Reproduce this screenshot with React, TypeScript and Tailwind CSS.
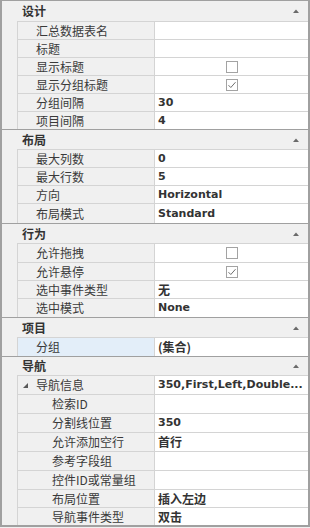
import React from 'react';

type Row = {
    name: string;
    h: string;
    value?: string;
    check?: boolean;
    sub?: boolean;
    expander?: boolean;
    selected?: boolean;
};

type Section = {
    title: string;
    h: string;
    first?: boolean;
    rows: Row[];
};

const sections: Section[] = [
    {
        title: '设计',
        h: 'h-[20px]',
        first: true,
        rows: [
            { name: '汇总数据表名', h: 'h-[18px]' },
            { name: '标题', h: 'h-[18px]' },
            { name: '显示标题', h: 'h-[18px]', check: false },
            { name: '显示分组标题', h: 'h-[18px]', check: true },
            { name: '分组间隔', h: 'h-[18px]', value: '30' },
            { name: '项目间隔', h: 'h-[18px]', value: '4' },
        ],
    },
    {
        title: '布局',
        h: 'h-[19px]',
        rows: [
            { name: '最大列数', h: 'h-[18px]', value: '0' },
            { name: '最大行数', h: 'h-[18px]', value: '5' },
            { name: '方向', h: 'h-[18px]', value: 'Horizontal' },
            { name: '布局模式', h: 'h-[20px]', value: 'Standard' },
        ],
    },
    {
        title: '行为',
        h: 'h-[19px]',
        rows: [
            { name: '允许拖拽', h: 'h-[19px]', check: false },
            { name: '允许悬停', h: 'h-[18px]', check: true },
            { name: '选中事件类型', h: 'h-[18px]', value: '无' },
            { name: '选中模式', h: 'h-[19px]', value: 'None' },
        ],
    },
    {
        title: '项目',
        h: 'h-[19px]',
        rows: [{ name: '分组', h: 'h-[19px]', value: '(集合)', selected: true }],
    },
    {
        title: '导航',
        h: 'h-[18px]',
        rows: [
            { name: '导航信息', h: 'h-[19px]', value: '350,First,Left,Double...', expander: true },
            { name: '检索ID', h: 'h-[19px]', sub: true },
            { name: '分割线位置', h: 'h-[19px]', value: '350', sub: true },
            { name: '允许添加空行', h: 'h-[19px]', value: '首行', sub: true },
            { name: '参考字段组', h: 'h-[19px]', sub: true },
            { name: '控件ID或常量组', h: 'h-[19px]', sub: true },
            { name: '布局位置', h: 'h-[18px]', value: '插入左边', sub: true },
            { name: '导航事件类型', h: 'h-[18px]', value: '双击', sub: true },
        ],
    },
];

const CheckBox = ({ checked }: { checked: boolean }) => (
    <svg width="12" height="12" viewBox="0 0 12 12">
        <rect x="0.5" y="0.5" width="11" height="11" fill="#ffffff" stroke="#a3a3a3" />
        {checked && (
            <path d="M2.5 6.2 L4.8 8.5 L9.5 3.2" fill="none" stroke="#6e6e6e" strokeWidth="1" />
        )}
    </svg>
);

const PropRow = ({ row }: { row: Row }) => {
    const ascii = row.value ? /^[\x20-\x7e]+$/.test(row.value) : false;
    return (
        <div className={`flex ${row.h}`}>
            <div className="w-[15px] shrink-0" />
            <div className="flex flex-1 min-w-0 border-t border-l border-[#d4d4d4]">
                <div
                    className={`w-[137px] shrink-0 flex items-center border-r border-[#d4d4d4] text-[12px] text-[#3a3a3a] whitespace-nowrap ${
                        row.selected ? 'bg-[#e3eef9]' : 'bg-[#f0f0f0]'
                    } ${row.sub ? 'pl-[34px]' : row.expander ? 'pl-[5px]' : 'pl-[18px]'}`}
                >
                    {row.expander && (
                        <svg width="5" height="5" viewBox="0 0 5 5" className="mr-[8px] mt-[1px]">
                            <polygon points="5,0 5,5 0,5" fill="#595959" />
                        </svg>
                    )}
                    {row.name}
                </div>
                <div className="flex-1 min-w-0 bg-white flex items-center">
                    {row.check !== undefined ? (
                        <div className="flex-1 flex justify-center">
                            <CheckBox checked={row.check} />
                        </div>
                    ) : (
                        row.value && (
                            <span
                                className={`pl-[3px] font-bold text-[#333333] whitespace-nowrap ${
                                    ascii
                                        ? "text-[11px] font-['DejaVu_Sans','Noto_Sans_CJK_SC',sans-serif]"
                                        : 'text-[12px]'
                                }`}
                            >
                                {row.value}
                            </span>
                        )
                    )}
                </div>
            </div>
        </div>
    );
};

const App = () => {
    return (
        <div className="w-[310px] h-[528px] bg-[#f0f0f0] font-['Noto_Sans_CJK_SC','Noto_Sans',sans-serif] leading-[14px]">
            <div className="h-[527px] border-t border-l-2 border-r-2 border-b-2 border-[#a0a0a0] flex flex-col">
                {sections.map((s) => (
                    <div key={s.title} className={s.first ? '' : 'border-t border-[#a0a0a0]'}>
                        <div className={`${s.h} flex items-center pl-[20px] pr-[9px]`}>
                            <span className="text-[12px] font-bold text-[#333333]">{s.title}</span>
                            <svg width="6" height="4" viewBox="0 0 6 4" className="ml-auto">
                                <polygon points="0,4 3,0.5 6,4" fill="#6a6a6a" />
                            </svg>
                        </div>
                        {s.rows.map((r) => (
                            <PropRow key={r.name} row={r} />
                        ))}
                    </div>
                ))}
            </div>
        </div>
    );
};

export default App;
